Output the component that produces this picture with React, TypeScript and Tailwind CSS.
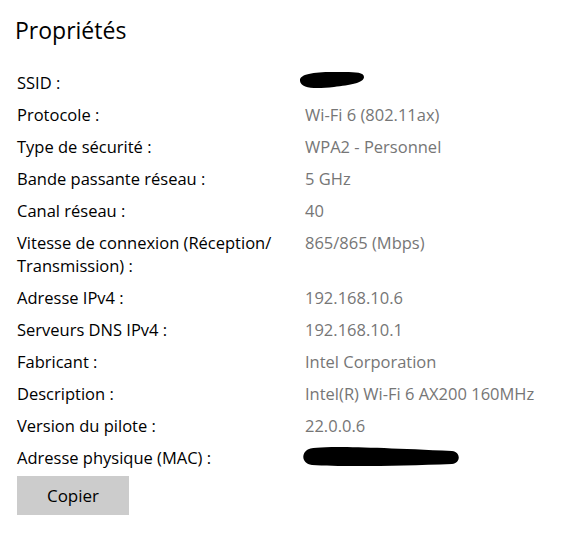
import React from "react";

type Row = {
  label: string;
  value?: string;
  hidden?: "ssid" | "mac";
};

const rows: Row[] = [
  { label: "SSID :", hidden: "ssid" },
  { label: "Protocole :", value: "Wi-Fi 6 (802.11ax)" },
  { label: "Type de sécurité :", value: "WPA2 - Personnel" },
  { label: "Bande passante réseau :", value: "5 GHz" },
  { label: "Canal réseau :", value: "40" },
  {
    label: "Vitesse de connexion (Réception/ Transmission) :",
    value: "865/865 (Mbps)",
  },
  { label: "Adresse IPv4 :", value: "192.168.10.6" },
  { label: "Serveurs DNS IPv4 :", value: "192.168.10.1" },
  { label: "Fabricant :", value: "Intel Corporation" },
  { label: "Description :", value: "Intel(R) Wi-Fi 6 AX200 160MHz" },
  { label: "Version du pilote :", value: "22.0.0.6" },
  { label: "Adresse physique (MAC) :", hidden: "mac" },
];

// marker strokes hiding the SSID / MAC values
function Scribble({ kind }: { kind: "ssid" | "mac" }) {
  if (kind === "ssid") {
    return (
      <svg width="70" height="20" viewBox="0 0 70 20" className="block -ml-[7px]">
        <path
          d="M2 10 C1 3 16 1 34 1 C52 1 66 0 66 6 C66 12 52 14 36 16 C18 18 3 18 2 10 Z"
          fill="#000"
        />
      </svg>
    );
  }
  return (
    <svg width="160" height="22" viewBox="0 0 160 22" className="block -ml-[3px]">
      <path
        d="M5 4 C12 -1 60 1 150 5 C159 6 159 17 150 18 C100 20 40 21 10 19 C0 18 -1 8 5 4 Z"
        fill="#000"
      />
    </svg>
  );
}

export default function App() {
  return (
    <div
      className="w-[568px] h-[536px] bg-white text-black overflow-hidden"
      style={{ fontFamily: '"Segoe UI", "Open Sans", sans-serif' }}
    >
      <h1 className="pl-[15px] pt-[14px] text-[23px] leading-[32px] font-normal">
        Propriétés
      </h1>

      <div className="mt-[25px] pl-[17px] flex flex-col gap-[9px] text-[16.5px] leading-[23px]">
        {rows.map((row) => (
          <div key={row.label} className="grid grid-cols-[288px_1fr]">
            <div className="pr-4">{row.label}</div>
            <div className="text-[#767676]">
              {row.hidden ? <Scribble kind={row.hidden} /> : row.value}
            </div>
          </div>
        ))}
      </div>

      <div className="pl-[17px] mt-[7px]">
        <button className="w-[112px] h-[39px] bg-[#cccccc] text-[17px] text-black">
          Copier
        </button>
      </div>
    </div>
  );
}
